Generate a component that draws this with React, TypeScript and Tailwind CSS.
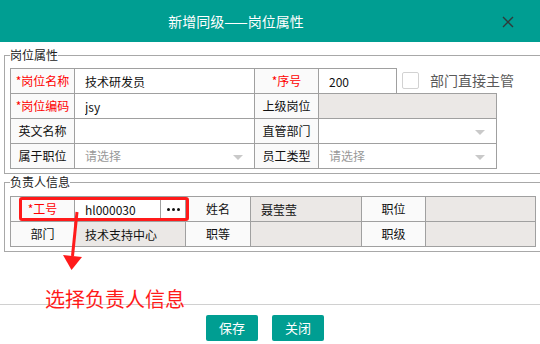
import type { ReactNode } from "react";

const FONT = "font-['Noto_Sans_CJK_SC','Noto_Sans',sans-serif]";

function Label({ children, required }: { children: ReactNode; required?: boolean }) {
  return (
    <td className={`h-[25px] border border-[#a0a0a0] bg-[#fafafa] p-0 text-center text-[12px] ${required ? "text-[#ff0000]" : "text-[#111]"}`}>
      {required && "*"}
      {children}
    </td>
  );
}

function TextCell({ value, readOnly, colSpan }: { value?: string; readOnly?: boolean; colSpan?: number }) {
  return (
    <td colSpan={colSpan} className={`h-[25px] border border-[#a0a0a0] p-0 ${readOnly ? "bg-[#ebe8e6]" : "bg-white"}`}>
      <input
        readOnly
        value={value ?? ""}
        className="block h-[23px] w-full bg-transparent px-[10px] text-[12px] text-[#111] outline-none"
      />
    </td>
  );
}

function SelectCell({ placeholder, colSpan }: { placeholder?: string; colSpan?: number }) {
  return (
    <td colSpan={colSpan} className="h-[25px] border border-[#a0a0a0] bg-white p-0">
      <div className="flex h-[23px] items-center justify-between pl-[10px] pr-[11px] text-[12px] text-[#999]">
        <span>{placeholder}</span>
        <span className="mt-[3px] h-0 w-0 border-x-[5px] border-t-[5px] border-b-0 border-x-transparent border-t-[#c9c9c9]" />
      </div>
    </td>
  );
}

export default function App() {
  return (
    <div className={`relative h-[344px] w-[540px] overflow-hidden bg-white ${FONT}`}>
      {/* title bar */}
      <div className="flex h-[42px] items-center bg-[#009e92] pr-[68px]">
        <div className="flex-1 text-center text-[14px] text-white">新增同级——岗位属性</div>
        <svg className="absolute left-[502px] top-[16px]" width="12" height="12" viewBox="0 0 12 12">
          <path d="M1 1 L11 11 M11 1 L1 11" stroke="#2f3a3a" strokeWidth="1.4" />
        </svg>
      </div>

      {/* 岗位属性 */}
      <fieldset className="ml-[4px] mt-[6px] w-[560px] border border-[#a8a8a8] px-[5px] pb-[4px] pt-[6px]">
        <legend className="text-[12px] leading-[14px] text-[#222]">岗位属性</legend>
        <table className="w-[486px] table-fixed border-collapse">
          <colgroup>
            <col className="w-[64px]" />
            <col className="w-[180px]" />
            <col className="w-[64px]" />
            <col className="w-[78px]" />
            <col className="w-[100px]" />
          </colgroup>
          <tbody>
            <tr>
              <Label required>岗位名称</Label>
              <TextCell value="技术研发员" />
              <Label required>序号</Label>
              <TextCell value="200" />
              <td className="overflow-visible p-0">
                <div className="flex w-[130px] items-center whitespace-nowrap pl-[5px]">
                  <span className="h-[17px] w-[17px] shrink-0 rounded-[2px] border border-[#d2d2d2] bg-white" />
                  <span className="ml-[11px] text-[14px] text-[#5a5a5a]">部门直接主管</span>
                </div>
              </td>
            </tr>
            <tr>
              <Label required>岗位编码</Label>
              <TextCell value="jsy" />
              <Label>上级岗位</Label>
              <TextCell readOnly colSpan={2} />
            </tr>
            <tr>
              <Label>英文名称</Label>
              <TextCell />
              <Label>直管部门</Label>
              <SelectCell colSpan={2} />
            </tr>
            <tr>
              <Label>属于职位</Label>
              <SelectCell placeholder="请选择" />
              <Label>员工类型</Label>
              <SelectCell placeholder="请选择" colSpan={2} />
            </tr>
          </tbody>
        </table>
      </fieldset>

      {/* 负责人信息 */}
      <fieldset className="ml-[4px] mt-[1px] w-[560px] border border-[#a8a8a8] px-[5px] pb-[4px] pt-[7px]">
        <legend className="text-[12px] leading-[14px] text-[#222]">负责人信息</legend>
        <table className="w-[525px] table-fixed border-collapse">
          <colgroup>
            <col className="w-[64px]" />
            <col className="w-[86px]" />
            <col className="w-[25px]" />
            <col className="w-[65px]" />
            <col className="w-[111px]" />
            <col className="w-[64px]" />
            <col className="w-[110px]" />
          </colgroup>
          <tbody>
            <tr>
              <Label required>工号</Label>
              <TextCell value="hl000030" />
              <td className="h-[25px] border border-[#a0a0a0] bg-white p-0">
                <div className="flex items-center justify-center gap-[2px]">
                  <span className="h-[3px] w-[3px] rounded-full bg-[#111]" />
                  <span className="h-[3px] w-[3px] rounded-full bg-[#111]" />
                  <span className="h-[3px] w-[3px] rounded-full bg-[#111]" />
                </div>
              </td>
              <Label>姓名</Label>
              <TextCell value="聂莹莹" readOnly />
              <Label>职位</Label>
              <TextCell readOnly />
            </tr>
            <tr>
              <Label>部门</Label>
              <TextCell value="技术支持中心" readOnly colSpan={2} />
              <Label>职等</Label>
              <TextCell readOnly />
              <Label>职级</Label>
              <TextCell readOnly />
            </tr>
          </tbody>
        </table>
      </fieldset>

      {/* footer */}
      <div className="mt-[52px] flex justify-center gap-[14px] border-t border-[#d0d0d0] pr-[10px] pt-[10px]">
        <button type="button" className="h-[26px] w-[52px] rounded-[2px] bg-[#009e92] text-[13px] text-white">
          保存
        </button>
        <button type="button" className="h-[26px] w-[52px] rounded-[2px] bg-[#009e92] text-[13px] text-white">
          关闭
        </button>
      </div>

      {/* annotation */}
      <div className="absolute left-[19px] top-[197px] h-[24px] w-[170px] rounded-[3px] border-[3px] border-[#ff1a1a]" />
      <svg className="absolute left-[60px] top-[208px]" width="26" height="66" viewBox="0 0 26 66">
        <path d="M17 4 L12.5 48" stroke="#ff1a1a" strokeWidth="3" />
        <polygon points="3,47 22,49 11.5,62" fill="#ff1a1a" />
      </svg>
      <div className="absolute left-[45px] top-[288px] text-[20px] leading-[22px] text-[#ff1a1a]">选择负责人信息</div>
    </div>
  );
}
